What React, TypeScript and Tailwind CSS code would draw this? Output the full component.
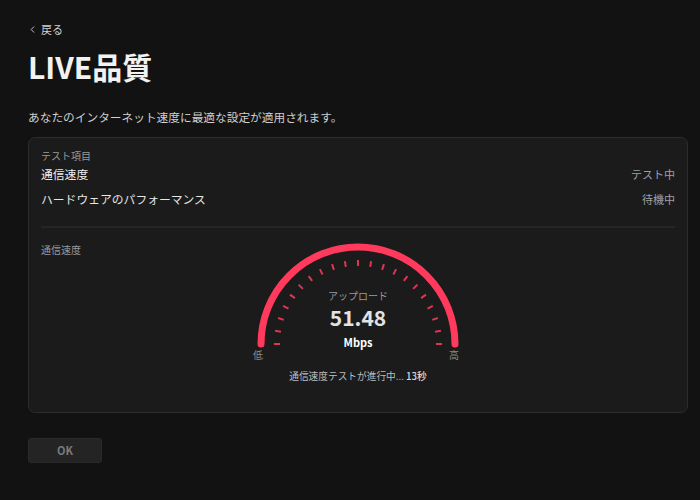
import { ChevronLeft } from 'lucide-react'

const ARC = '#ff3a5c'

function Gauge() {
  // center of the half circle inside a 220x125 box
  const cx = 110
  const cy = 106
  const r = 97
  const ticks = Array.from({ length: 21 }, (_, i) => {
    const a = Math.PI - (i * Math.PI) / 20
    const x1 = cx + 78 * Math.cos(a)
    const y1 = cy - 78 * Math.sin(a)
    const x2 = cx + 84 * Math.cos(a)
    const y2 = cy - 84 * Math.sin(a)
    return { x1, y1, x2, y2 }
  })

  return (
    <div className="relative w-[220px] h-[125px]">
      <svg width="220" height="125" viewBox="0 0 220 125" className="absolute inset-0">
        <path
          d={`M ${cx - r} ${cy} A ${r} ${r} 0 0 1 ${cx + r} ${cy}`}
          fill="none"
          stroke={ARC}
          strokeWidth="7"
          strokeLinecap="round"
        />
        {ticks.map((t, i) => (
          <line
            key={i}
            x1={t.x1}
            y1={t.y1}
            x2={t.x2}
            y2={t.y2}
            stroke={ARC}
            strokeOpacity="0.85"
            strokeWidth="2"
          />
        ))}
      </svg>
      <div className="absolute left-0 right-0 top-[51px] text-center text-[10px] leading-[14px] text-[#9a9a9a]">
        アップロード
      </div>
      <div className="absolute left-0 right-0 top-[65px] text-center text-[21px] leading-[28px] font-bold text-[#e2e2e2]">
        51.48
      </div>
      <div className="absolute left-0 right-0 top-[97px] text-center text-[11px] leading-[14px] font-bold text-white">
        Mbps
      </div>
      <div className="absolute left-[5px] top-[110px] text-[10px] leading-[14px] text-[#8a8a8a]">低</div>
      <div className="absolute left-[201px] top-[110px] text-[10px] leading-[14px] text-[#8a8a8a]">高</div>
    </div>
  )
}

export default function App() {
  return (
    <div
      className="w-[700px] h-[500px] bg-[#121212] pl-[28px] pr-[12px] pt-[21px] text-white"
      style={{ fontFamily: '"Noto Sans CJK JP", "Noto Sans", sans-serif' }}
    >
      {/* Back */}
      <button className="flex items-center gap-[3px] h-[16px] text-[11px] leading-[16px] text-[#cfcfcf]">
        <ChevronLeft className="w-[11px] h-[11px] -ml-[1px]" strokeWidth={2} />
        <span>戻る</span>
      </button>

      <h1 className="mt-[12px] text-[30px] leading-[34px] font-bold text-[#f2f2f2]">LIVE品質</h1>

      <p className="mt-[26px] text-[11.7px] leading-[16px] text-[#cfcfcf]">
        あなたのインターネット速度に最適な設定が適用されます。
      </p>

      {/* Card */}
      <div className="mt-[12px] w-[660px] h-[276px] rounded-[7px] border border-[#2c2c2c] bg-[#1b1b1b] px-[12px] pt-[11px]">
        <div className="text-[10px] leading-[14px] text-[#9a9a9a]">テスト項目</div>
        <div className="mt-[1px] flex items-center justify-between h-[20px] text-[11.8px]">
          <span className="text-[#eeeeee]">通信速度</span>
          <span className="text-[11px] text-[#a0a0a0]">テスト中</span>
        </div>
        <div className="mt-[5px] flex items-center justify-between h-[20px] text-[11.8px]">
          <span className="text-[#e6e6e6]">ハードウェアのパフォーマンス</span>
          <span className="text-[11px] text-[#a0a0a0]">待機中</span>
        </div>
        <div className="mt-[17px] h-[2px] bg-[#262626]" />
        <div className="mt-[15px] text-[10px] leading-[14px] text-[#9a9a9a]">通信速度</div>

        <div className="flex flex-col items-center -mt-[19px]">
          <Gauge />
          <div className="mt-[6px] text-[9.7px] leading-[14px] text-[#bdbdbd]">
            通信速度テストが進行中... <span className="font-medium text-[#d8d8d8]">13秒</span>
          </div>
        </div>
      </div>

      <button className="mt-[25px] w-[74px] h-[25px] rounded-[3px] border border-[#2a2a2a] bg-[#242424] text-[11px] font-bold text-[#7a7a7a]">
        OK
      </button>
    </div>
  )
}
